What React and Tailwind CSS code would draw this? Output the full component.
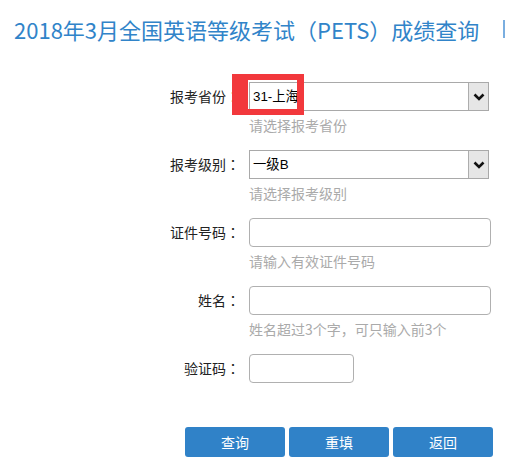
import React from 'react';

const font = { fontFamily: '"Noto Sans CJK SC", "Noto Sans", sans-serif' };
const colonFont = { fontFamily: '"Noto Sans CJK TC", sans-serif' };
const selectFont = { fontFamily: '"Liberation Sans", "Noto Sans CJK SC", sans-serif' };

function Chevron() {
  return (
    <svg width="12" height="8" viewBox="0 0 12 8">
      <path d="M1.5 1.5 L6 6 L10.5 1.5" fill="none" stroke="#111" strokeWidth="2.6" />
    </svg>
  );
}

function FakeSelect({ value }) {
  return (
    <div className="relative flex h-[29px] w-[240px] items-center border border-[#a9a9a9] bg-white">
      <span className="pl-[3px] text-[13.33px] leading-none text-black" style={selectFont}>{value}</span>
      <div className="absolute right-0 top-0 flex h-full w-[20px] items-center justify-center border-l border-[#adadad] bg-[#e6e6e6]">
        <Chevron />
      </div>
    </div>
  );
}

function Row({ label, hint, children }) {
  return (
    <div className="flex">
      <div className="flex h-[29px] w-[240px] items-center justify-end text-[14px] text-[#222]">
        {label}
        <span style={colonFont}>：</span>
      </div>
      <div className="ml-[9px] flex flex-col">
        {children}
        {hint && <div className="mt-[4px] text-[14px] leading-[20px] text-[#aaa]">{hint}</div>}
      </div>
    </div>
  );
}

export default function App() {
  return (
    <div className="h-[469px] w-[519px] bg-white" style={font}>
      <div className="flex items-center pl-[14px] pt-[14px]">
        <h1 className="text-[22px] leading-[30px] text-[#3184c9]">2018年3月全国英语等级考试（PETS）成绩查询</h1>
        <span className="ml-[24px] h-[18px] w-[2px] bg-[#7aaee0]" />
      </div>

      <div className="relative mt-[38px] flex flex-col gap-[15px]">
        <Row label="报考省份" hint="请选择报考省份">
          <FakeSelect value="31-上海" />
        </Row>
        <Row label="报考级别" hint="请选择报考级别">
          <FakeSelect value="一级B" />
        </Row>
        <Row label="证件号码" hint="请输入有效证件号码">
          <div className="h-[29px] w-[242px] rounded-[4px] border border-[#b0b0b0]" />
        </Row>
        <Row label="姓名" hint="姓名超过3个字，可只输入前3个">
          <div className="h-[29px] w-[242px] rounded-[4px] border border-[#b0b0b0]" />
        </Row>
        <Row label="验证码">
          <div className="h-[29px] w-[105px] rounded-[4px] border border-[#b0b0b0]" />
        </Row>

        <div className="pointer-events-none absolute left-[232px] top-[-8px] h-[41px] w-[72px] border-b-[6px] border-l-[16px] border-r-[7px] border-t-[6px] border-[#f2383c]" />
      </div>

      <div className="ml-[185px] mt-[44px] flex gap-[4px]">
        {['查询', '重填', '返回'].map((t) => (
          <button key={t} className="h-[30px] w-[100px] rounded-[3px] bg-[#3082c8] text-[14px] text-white">
            {t}
          </button>
        ))}
      </div>
    </div>
  );
}
